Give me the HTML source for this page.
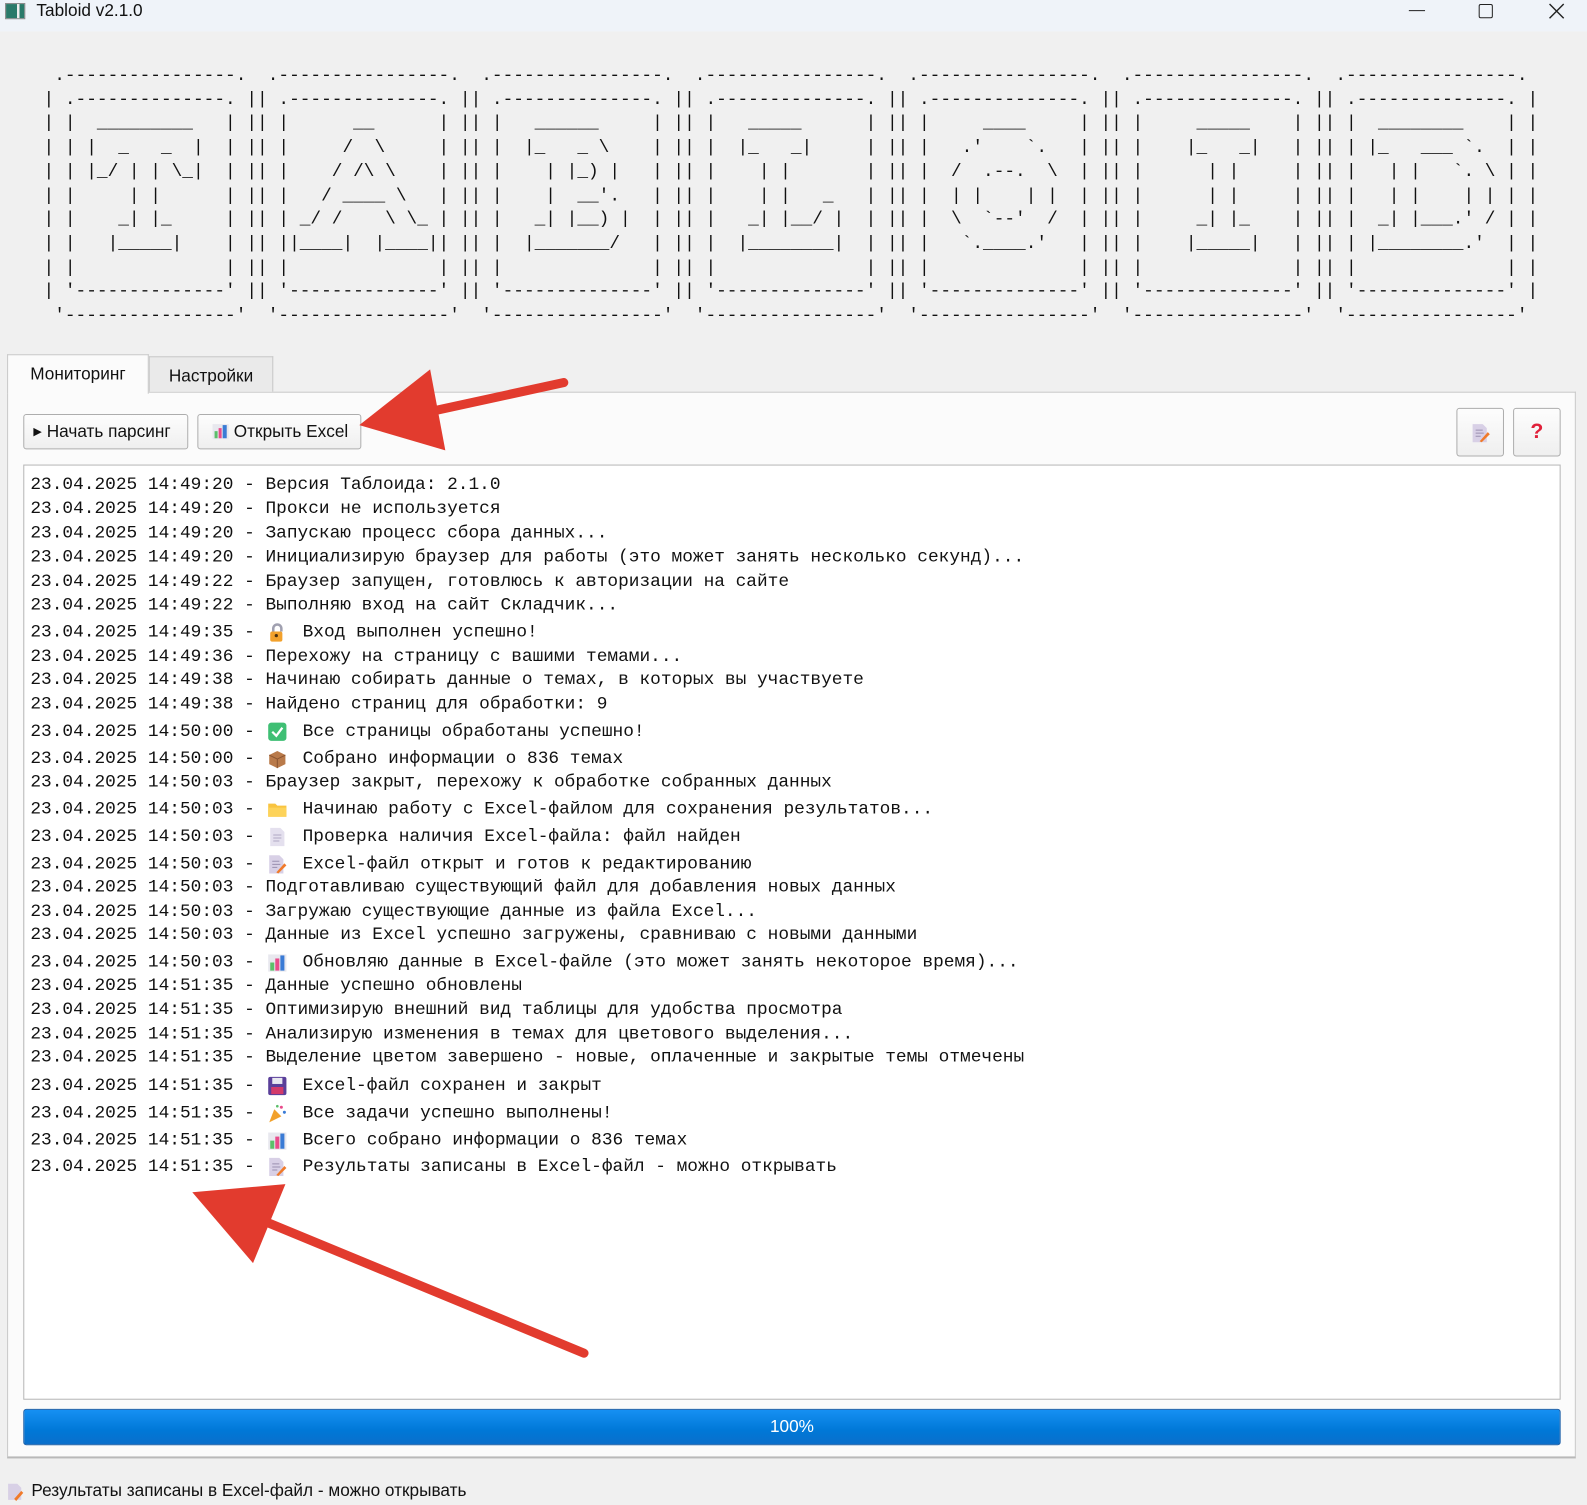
<!DOCTYPE html>
<html><head><meta charset="utf-8">
<style>
*{margin:0;padding:0;box-sizing:border-box}
html,body{width:1587px;height:1505px;overflow:hidden;background:#f0f0f0;font-family:"Liberation Sans",sans-serif;position:relative}
#wrap{position:absolute;left:0;top:0;width:1568px;height:1487px;transform:scale(1.0121);transform-origin:0 0}
.abs{position:absolute}
#title{left:0;top:0;width:1568px;height:31px;background:#eff3f9}
#title .t{left:36px;top:1px;font-size:17px;color:#111}
pre.art{position:absolute;left:43px;top:64px;font-family:"Liberation Mono",monospace;font-size:17.58px;line-height:23.7px;color:#111;white-space:pre}
.tab{position:absolute;top:350px;height:38px;border:1px solid #c8c8c8;border-bottom:none;font-size:17px;line-height:38px;text-align:center;color:#111}
#pane{left:7px;top:387px;width:1550px;height:1054px;background:#fbfbfb;border:1px solid #c8c8c8;border-bottom:2px solid #b9b9b9}
.btn{position:absolute;border:1px solid #adadad;border-radius:3px;background:linear-gradient(#fdfdfd,#efefef);font-size:17px;color:#111}
#log{left:23px;top:459px;width:1519px;height:924px;background:#fff;border:1px solid #b5b5b5}
.ln{position:absolute;left:30px;height:24px;line-height:24px;font-family:"Liberation Mono",monospace;font-size:17.6px;color:#111;white-space:pre;margin-top:2px}
.em{position:absolute;left:234px;top:2px;width:20px;height:20px}
.tx{position:absolute;left:269px;top:0}
#prog{left:23px;top:1392px;width:1519px;height:36px;border:1px solid #1b5fa8;border-radius:3px;background:linear-gradient(#1690f3,#0078d7 60%,#0a6fcb);color:#fff;font-size:17px;line-height:34px;text-align:center}
</style></head><body><div id="wrap">
<div id="title" class="abs">
 <div class="abs" style="left:5px;top:3px;width:20px;height:16px;border:1px solid #888;background:linear-gradient(90deg,#2a7a6a 0 60%,#eee 60% 75%,#2a7a6a 75%)"></div>
 <div class="abs t">Tabloid v2.1.0</div>
 <div class="abs" style="left:1392px;top:10px;width:16px;height:1px;background:#222"></div>
 <div class="abs" style="left:1461px;top:4px;width:14px;height:14px;border:1.5px solid #222;border-radius:2px"></div>
 <svg class="abs" style="left:1530px;top:3px" width="16" height="16"><path d="M1 1L15 15M15 1L1 15" stroke="#222" stroke-width="1.4"/></svg>
</div>
<pre class="art"> .----------------.  .----------------.  .----------------.  .----------------.  .----------------.  .----------------.  .----------------. 
| .--------------. || .--------------. || .--------------. || .--------------. || .--------------. || .--------------. || .--------------. |
| |  _________   | || |      __      | || |   ______     | || |   _____      | || |     ____     | || |     _____    | || |  ________    | |
| | |  _   _  |  | || |     /  \     | || |  |_   _ \    | || |  |_   _|     | || |   .'    `.   | || |    |_   _|   | || | |_   ___ `.  | |
| | |_/ | | \_|  | || |    / /\ \    | || |    | |_) |   | || |    | |       | || |  /  .--.  \  | || |      | |     | || |   | |   `. \ | |
| |     | |      | || |   / ____ \   | || |    |  __'.   | || |    | |   _   | || |  | |    | |  | || |      | |     | || |   | |    | | | |
| |    _| |_     | || | _/ /    \ \_ | || |   _| |__) |  | || |   _| |__/ |  | || |  \  `--'  /  | || |     _| |_    | || |  _| |___.' / | |
| |   |_____|    | || ||____|  |____|| || |  |_______/   | || |  |________|  | || |   `.____.'   | || |    |_____|   | || | |________.'  | |
| |              | || |              | || |              | || |              | || |              | || |              | || |              | |
| '--------------' || '--------------' || '--------------' || '--------------' || '--------------' || '--------------' || '--------------' |
 '----------------'  '----------------'  '----------------'  '----------------'  '----------------'  '----------------'  '----------------' </pre>

<div id="pane" class="abs"></div>
<div class="tab" style="left:7px;width:140px;background:#fbfbfb;height:39px;z-index:2">Мониторинг</div>
<div class="tab" style="left:147px;width:123px;top:352px;height:35px;line-height:38px;background:#eaeaea">Настройки</div>

<div class="btn" style="left:23px;top:409px;width:163px;height:35px;line-height:33px;padding-left:9px"><span style="font-size:11px;position:relative;top:-2px">▶</span> Начать парсинг</div>
<div class="btn" style="left:195px;top:409px;width:162px;height:35px;line-height:33px;padding-left:13px">
 <svg width="18" height="18" style="vertical-align:-3px;margin-right:4px"><rect x="1" y="2" width="16" height="15" fill="#e8e8ee"/><rect x="3" y="9" width="3" height="7" fill="#5bbf6a"/><rect x="7" y="6" width="3" height="10" fill="#e84b8a"/><rect x="11" y="3" width="4" height="13" fill="#3a7bd5"/></svg>Открыть Excel</div>
<div class="btn" style="left:1439px;top:403px;width:47px;height:48px">
 <svg class="abs" style="left:13px;top:14px" width="20" height="20"><path d="M2 1H12L16 5V19H2Z" fill="#d8d0e6"/><path d="M5 7H12M5 10H13M5 13H10" stroke="#9a8fb0"/><path d="M9 18L17 9L19 11L11 19Z" fill="#f07a2a"/></svg></div>
<div class="btn" style="left:1495px;top:403px;width:47px;height:48px;text-align:center;line-height:46px;color:#e0203a;font-weight:bold;font-size:21px">?</div>

<div id="log" class="abs"></div>
<div class="ln" style="top:465px">23.04.2025 14:49:20 - Версия Таблоида: 2.1.0</div>
<div class="ln" style="top:489px">23.04.2025 14:49:20 - Прокси не используется</div>
<div class="ln" style="top:513px">23.04.2025 14:49:20 - Запускаю процесс сбора данных...</div>
<div class="ln" style="top:537px">23.04.2025 14:49:20 - Инициализирую браузер для работы (это может занять несколько секунд)...</div>
<div class="ln" style="top:561px">23.04.2025 14:49:22 - Браузер запущен, готовлюсь к авторизации на сайте</div>
<div class="ln" style="top:584px">23.04.2025 14:49:22 - Выполняю вход на сайт Складчик...</div>
<div class="ln" style="top:611px">23.04.2025 14:49:35 - <svg class="em" viewBox="0 0 20 20"><path d="M6 9V6a4 4 0 0 1 8 0v3" stroke="#a0a0b0" stroke-width="2.5" fill="none"/><rect x="3" y="9" width="12" height="10" rx="2" fill="#f2a12c"/><circle cx="9" cy="13" r="1.6" fill="#4a3010"/></svg><span class="tx">Вход выполнен успешно!</span></div>
<div class="ln" style="top:635px">23.04.2025 14:49:36 - Перехожу на страницу с вашими темами...</div>
<div class="ln" style="top:658px">23.04.2025 14:49:38 - Начинаю собирать данные о темах, в которых вы участвуете</div>
<div class="ln" style="top:682px">23.04.2025 14:49:38 - Найдено страниц для обработки: 9</div>
<div class="ln" style="top:709px">23.04.2025 14:50:00 - <svg class="em" viewBox="0 0 20 20"><rect x="1" y="1" width="18" height="18" rx="3" fill="#3fbf74"/><path d="M5 10L9 14L15 6" stroke="#fff" stroke-width="2.2" fill="none"/></svg><span class="tx">Все страницы обработаны успешно!</span></div>
<div class="ln" style="top:736px">23.04.2025 14:50:00 - <svg class="em" viewBox="0 0 20 20"><path d="M10 2L18 6V15L10 19L2 15V6Z" fill="#b97a4a"/><path d="M2 6L10 10L18 6M10 10V19" stroke="#8a5430" fill="none"/></svg><span class="tx">Собрано информации о 836 темах</span></div>
<div class="ln" style="top:759px">23.04.2025 14:50:03 - Браузер закрыт, перехожу к обработке собранных данных</div>
<div class="ln" style="top:786px">23.04.2025 14:50:03 - <svg class="em" viewBox="0 0 20 20"><path d="M1 4H8L10 6H19V17H1Z" fill="#f9c440"/><path d="M1 8H19V17H1Z" fill="#fdd35a"/></svg><span class="tx">Начинаю работу с Excel-файлом для сохранения результатов...</span></div>
<div class="ln" style="top:813px">23.04.2025 14:50:03 - <svg class="em" viewBox="0 0 20 20"><path d="M3 1H13L17 5V19H3Z" fill="#e4e0ee"/><path d="M6 8H14M6 11H14M6 14H12" stroke="#b0a8c4"/></svg><span class="tx">Проверка наличия Excel-файла: файл найден</span></div>
<div class="ln" style="top:840px">23.04.2025 14:50:03 - <svg class="em" viewBox="0 0 20 20"><path d="M2 1H12L16 5V19H2Z" fill="#d8d0e6"/><path d="M5 7H12M5 10H13M5 13H10" stroke="#9a8fb0"/><path d="M9 18L17 9L19 11L11 19Z" fill="#f07a2a"/></svg><span class="tx">Excel-файл открыт и готов к редактированию</span></div>
<div class="ln" style="top:863px">23.04.2025 14:50:03 - Подготавливаю существующий файл для добавления новых данных</div>
<div class="ln" style="top:887px">23.04.2025 14:50:03 - Загружаю существующие данные из файла Excel...</div>
<div class="ln" style="top:910px">23.04.2025 14:50:03 - Данные из Excel успешно загружены, сравниваю с новыми данными</div>
<div class="ln" style="top:937px">23.04.2025 14:50:03 - <svg class="em" viewBox="0 0 20 20"><rect x="1" y="2" width="18" height="17" fill="#e8e8ee"/><rect x="3" y="10" width="4" height="8" fill="#5bbf6a"/><rect x="8" y="6" width="4" height="12" fill="#e84b8a"/><rect x="13" y="3" width="4" height="15" fill="#3a7bd5"/></svg><span class="tx">Обновляю данные в Excel-файле (это может занять некоторое время)...</span></div>
<div class="ln" style="top:960px">23.04.2025 14:51:35 - Данные успешно обновлены</div>
<div class="ln" style="top:984px">23.04.2025 14:51:35 - Оптимизирую внешний вид таблицы для удобства просмотра</div>
<div class="ln" style="top:1008px">23.04.2025 14:51:35 - Анализирую изменения в темах для цветового выделения...</div>
<div class="ln" style="top:1031px">23.04.2025 14:51:35 - Выделение цветом завершено - новые, оплаченные и закрытые темы отмечены</div>
<div class="ln" style="top:1059px">23.04.2025 14:51:35 - <svg class="em" viewBox="0 0 20 20"><rect x="1" y="1" width="18" height="18" rx="2" fill="#5a3f9a"/><rect x="5" y="2" width="10" height="6" fill="#e8e8f0"/><rect x="4" y="11" width="12" height="7" fill="#d33a6a"/></svg><span class="tx">Excel-файл сохранен и закрыт</span></div>
<div class="ln" style="top:1086px">23.04.2025 14:51:35 - <svg class="em" viewBox="0 0 20 20"><path d="M2 19L7 6L14 13Z" fill="#f2a12c"/><circle cx="14" cy="4" r="1.5" fill="#e84b8a"/><circle cx="17" cy="9" r="1.5" fill="#3a7bd5"/><circle cx="10" cy="3" r="1.3" fill="#5bbf6a"/></svg><span class="tx">Все задачи успешно выполнены!</span></div>
<div class="ln" style="top:1113px">23.04.2025 14:51:35 - <svg class="em" viewBox="0 0 20 20"><rect x="1" y="2" width="18" height="17" fill="#e8e8ee"/><rect x="3" y="10" width="4" height="8" fill="#5bbf6a"/><rect x="8" y="6" width="4" height="12" fill="#e84b8a"/><rect x="13" y="3" width="4" height="15" fill="#3a7bd5"/></svg><span class="tx">Всего собрано информации о 836 темах</span></div>
<div class="ln" style="top:1139px">23.04.2025 14:51:35 - <svg class="em" viewBox="0 0 20 20"><path d="M2 1H12L16 5V19H2Z" fill="#d8d0e6"/><path d="M5 7H12M5 10H13M5 13H10" stroke="#9a8fb0"/><path d="M9 18L17 9L19 11L11 19Z" fill="#f07a2a"/></svg><span class="tx">Результаты записаны в Excel-файл - можно открывать</span></div>

<div id="prog" class="abs">100%</div>

<svg class="abs" style="left:6px;top:1465px" width="18" height="18"><path d="M2 1H11L15 5V17H2Z" fill="#d8d0e6"/><path d="M8 16L15 8L17 10L10 18Z" fill="#f07a2a"/></svg>
<div class="abs" style="left:31px;top:1463px;font-size:17px;color:#111">Результаты записаны в Excel-файл - можно открывать</div>

<svg class="abs" style="left:0;top:0" width="1568" height="1487">
 <path d="M557 378L410 410" stroke="#e23b2e" stroke-width="9" stroke-linecap="round"/>
 <path d="M355 420L425 365L440 445Z" fill="#e23b2e"/>
 <path d="M577 1337L250 1202" stroke="#e23b2e" stroke-width="9" stroke-linecap="round"/>
 <path d="M190 1178L282 1170L250 1248Z" fill="#e23b2e"/>
</svg>
</div></body></html>
